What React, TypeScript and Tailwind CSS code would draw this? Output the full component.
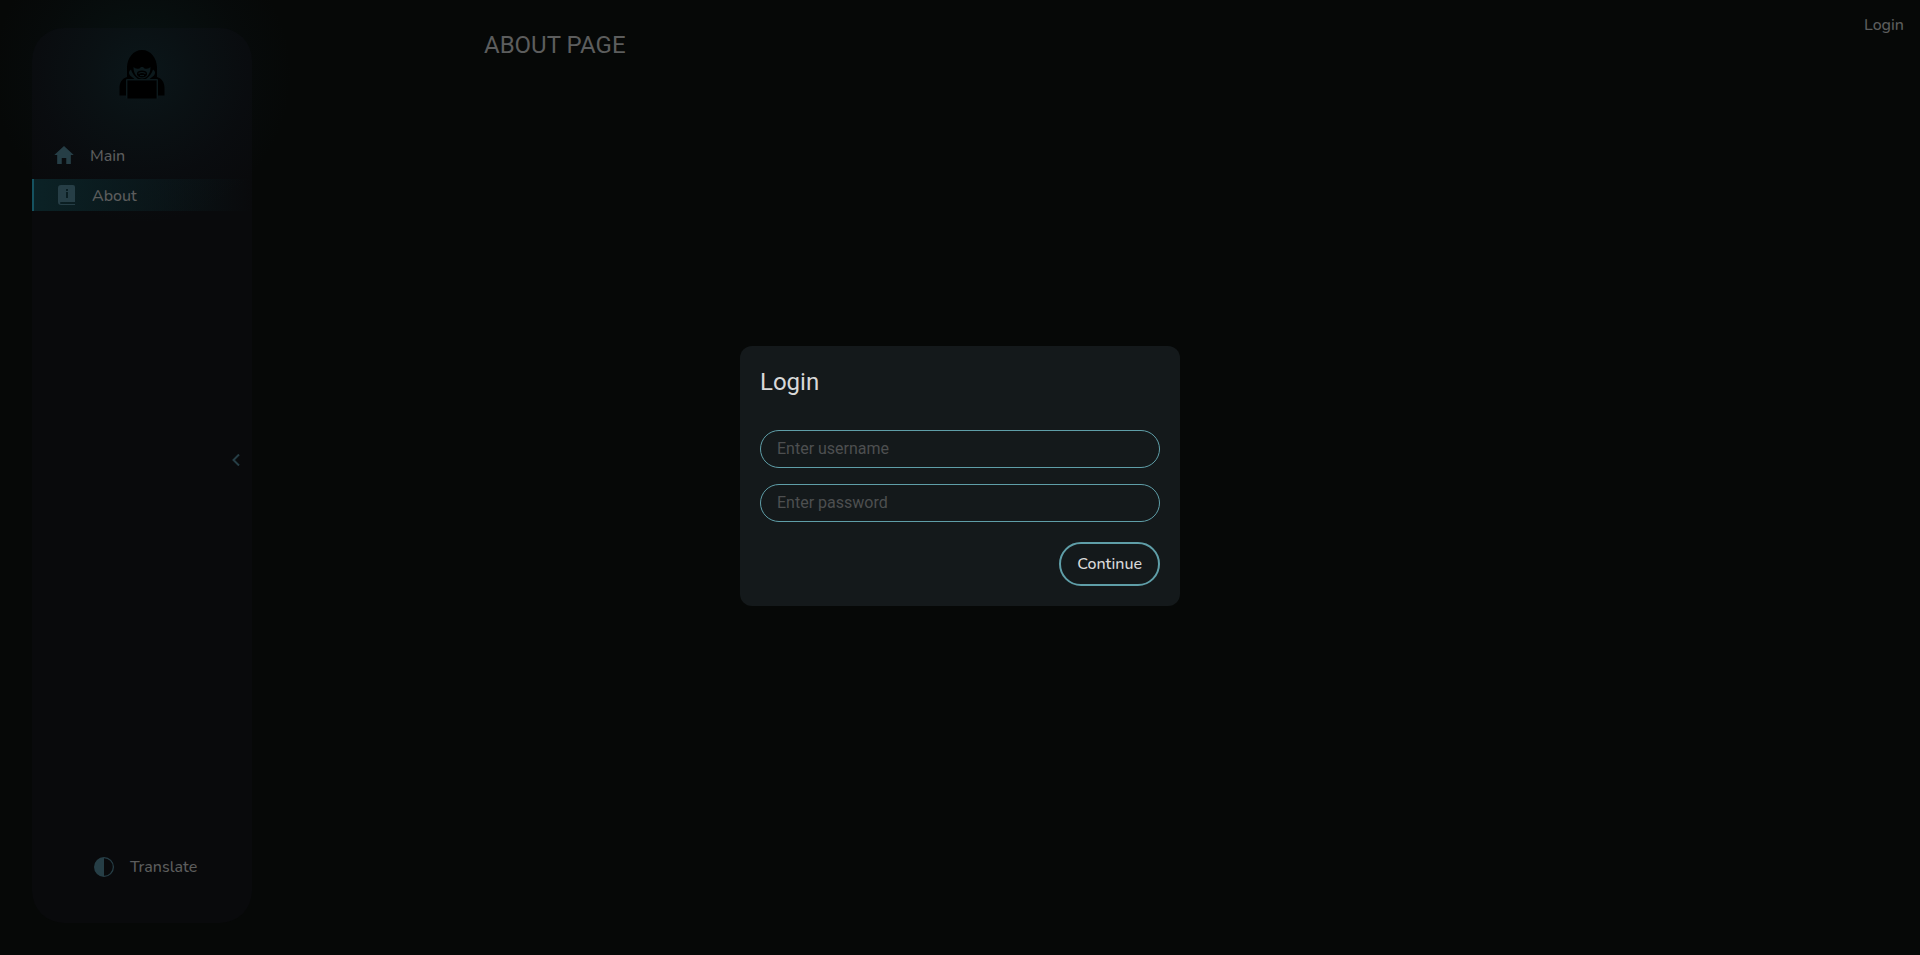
import { IoMdHome } from "react-icons/io";
import { BsCircleHalf } from "react-icons/bs";

function HackerLogo() {
  return (
    <svg viewBox="0 0 46 49" className="h-[49px] w-[46px]" aria-hidden="true">
      <path
        fill="#000"
        d="M23 0C14 0 8.500 8 8 17L8 27C3 28.500 .5 32.500 .5 38V45.500H7V30H39V45.500H45.500V38C45.500 32.500 43 28.500 38 27L38 17C37.500 8 32 0 23 0Z"
      />
      <path fill="#000" d="M8.500 30.500H37.500V48.500H8.500Z" />
      <path fill="none" stroke="#0c191c" strokeWidth="1" d="M7.500 48.500V29.500H38.500V48.500" />
      <path fill="#0c191c" d="M12 19.500Q8.500 22 11 25.500L15.500 29H19Q13.500 25 12 19.500ZM34 19.500Q37.500 22 35 25.500L30.500 29H27Q32.500 25 34 19.500Z" />
      <path fill="#0c191c" d="M14.500 17Q16.500 19.500 20.500 18.500L22 17H24L25.500 18.500Q29.500 19.500 31.500 17Q31.500 23 28.500 26Q26 28.500 23 28.500Q20 28.500 17.500 26Q14.500 23 14.500 17Z" />
      <path fill="#000" d="M18 23Q18.500 20.500 23 20.500Q27.500 20.500 28 23V25Q26.500 27.500 23 27.500Q19.500 27.500 18 25Z" />
      <path fill="none" stroke="#0c191c" strokeWidth="1.200" d="M19.500 23.500Q23 21.500 26.500 23.500M21 25.500H25" />
    </svg>
  );
}

function BookInfoIcon() {
  return (
    <svg viewBox="0 0 18 20" className="h-5 w-[18px]" fill="currentColor" aria-hidden="true">
      <path
        fillRule="evenodd"
        d="M3 0H15Q17 0 17 2V17H3Q2 17 2 18T3 19H17V20H3Q0 20 0 17V3Q0 0 3 0ZM8 4V6H10V4ZM8 7V13H10V7Z"
      />
    </svg>
  );
}

export default function App() {
  return (
    <div className="relative flex min-h-screen overflow-hidden bg-[#060807] font-['Nunito','Lato',sans-serif] text-base font-medium text-[#5c5d5d]">
      <aside className="relative mt-7 mb-8 ml-8 flex w-[220px] shrink-0 flex-col rounded-[32px] bg-[#090a0c] pt-[22px] pb-10">
        <div className="pointer-events-none absolute -top-[104px] -left-[40px] size-[300px] rounded-full bg-[radial-gradient(circle_closest-side,#15606c24_0%,#15606c14_35%,#15405c0a_70%,transparent_100%)]" />
        <div className="relative flex justify-center">
          <HackerLogo />
        </div>
        <nav className="relative mt-10 flex flex-col gap-2">
          <a href="#main" className="flex h-8 items-center gap-3.5 pl-5">
            <IoMdHome className="size-6 text-[#263e46]" />
            <span className="pt-0.5">Main</span>
          </a>
          <a
            href="#about"
            className="flex h-8 items-center gap-4 border-l-2 border-[#155260] bg-linear-to-r from-[#0b2226] to-transparent pl-6"
          >
            <span className="text-[#263e46]"><BookInfoIcon /></span>
            <span className="pt-0.5">About</span>
          </a>
        </nav>
        <button type="button" aria-label="Collapse" className="mt-60 mr-[7px] flex size-[18px] items-center justify-center self-end text-[#263e46]">
          <svg viewBox="0 0 8 12" className="h-3 w-2" fill="none" stroke="currentColor" strokeWidth="2" aria-hidden="true">
            <path d="M7 .5L1.500 6L7 11.500" />
          </svg>
        </button>
        <button type="button" className="mt-auto flex h-8 items-center gap-4 pl-[62px]">
          <BsCircleHalf className="size-5 text-[#263e46]" />
          Translate
        </button>
      </aside>
      <main className="grow pt-[29px] pl-[232px]">
        <h1 className="font-['Roboto',sans-serif] text-2xl font-normal">ABOUT PAGE</h1>
      </main>
      <header className="pt-[13px] pr-4">
        <button type="button">Login</button>
      </header>

      <div className="absolute inset-0 flex items-center justify-center pb-1">
        <form role="dialog" aria-labelledby="login-title" className="flex w-[440px] flex-col rounded-xl bg-[#14191b] p-5 font-['Roboto',sans-serif] font-normal">
          <h2 id="login-title" className="text-2xl text-[#d8d8d8]">Login</h2>
          <input
            type="text"
            aria-label="Username"
            placeholder="Enter username"
            className="mt-8 h-[38px] rounded-full border border-[#5f9ea8] px-4 placeholder:text-[#4d4f50]"
          />
          <input
            type="password"
            aria-label="Password"
            placeholder="Enter password"
            className="mt-4 h-[38px] rounded-full border border-[#5f9ea8] px-4 placeholder:text-[#4d4f50]"
          />
          <button type="button" className="mt-5 h-11 self-end rounded-full border-2 border-[#5f9ea8] px-4 font-['Nunito','Lato',sans-serif] font-medium text-[#d8d8d8]">
            Continue
          </button>
        </form>
      </div>
    </div>
  );
}
